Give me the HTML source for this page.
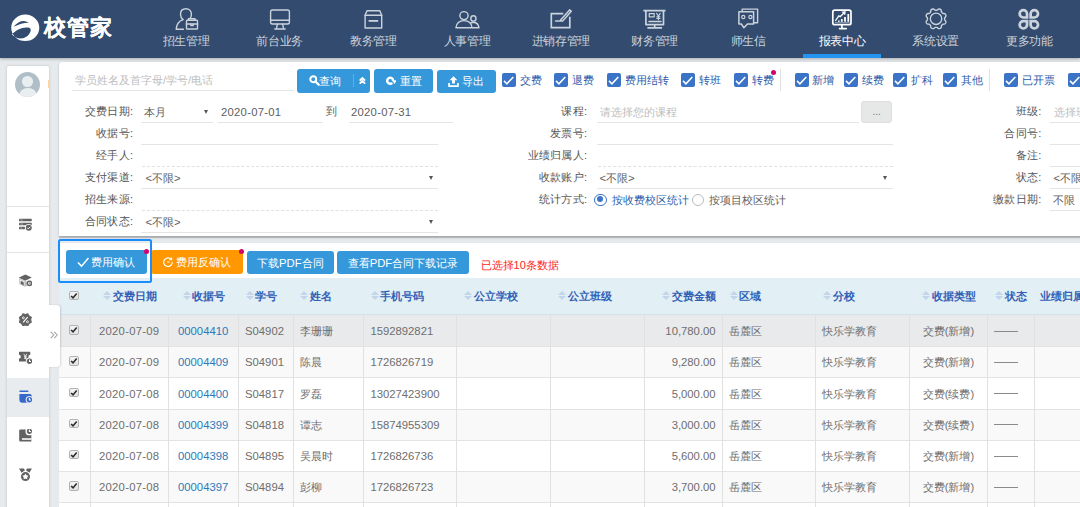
<!DOCTYPE html>
<html lang="zh">
<head>
<meta charset="utf-8">
<title>校管家</title>
<style>
*{box-sizing:border-box;margin:0;padding:0}
html,body{width:1080px;height:507px;overflow:hidden}
body{position:relative;background:#e6eaed;font-family:"Liberation Sans",sans-serif;font-size:11px;color:#555;line-height:1}
.abs{position:absolute}
/* NAV */
#nav{position:absolute;left:0;top:0;width:1080px;height:57.5px;background:#324b6e;box-shadow:0 1px 3px rgba(0,0,0,.28);z-index:5}
#logo-t{position:absolute;left:43.6px;top:15.2px;font-size:21.6px;font-weight:bold;color:#fff;line-height:26px;letter-spacing:1.1px;white-space:nowrap;-webkit-text-stroke:.1px #fff}
.ni{position:absolute;top:0;width:93.7px;height:57.5px;text-align:center;color:#cbd3dd}
.ni svg{position:absolute;left:50%;top:6px;width:30px;height:26px;margin-left:-15px;overflow:visible}
.ni span{position:absolute;left:0;right:0;top:34.4px;letter-spacing:-.3px;font-size:11.6px;line-height:13px;white-space:nowrap}
.ni.act{color:#fff}
.ni.act:after{content:"";position:absolute;left:8px;right:8px;bottom:0;height:3.5px;background:#2494f0}
/* SIDEBAR */
#side{position:absolute;left:7px;top:65.5px;width:42.3px;height:460px;background:#fff;box-shadow:0 0 3px rgba(0,0,0,.18);border-radius:2px 2px 0 0}
#tab{position:absolute;left:48px;top:304.6px;width:12.2px;height:62.6px;background:#fff;border-radius:0 3px 3px 0;box-shadow:1px 0 2px rgba(0,0,0,.14);z-index:3;color:#aaa;font-size:13px}
.sdiv{position:absolute;left:0;width:42.3px;height:1px;background:#e4e4e4}
.sic{position:absolute;left:11.5px;width:13.5px;height:13.5px}
/* FILTER PANEL */
#fp{position:absolute;left:59px;top:62px;width:1040px;height:174px;background:#fff;box-shadow:0 1.2px 1.6px rgba(0,0,0,.26),0 0 2px rgba(0,0,0,.08);border-radius:3px 0 0 0}
.lbl{position:absolute;text-align:right;font-size:11px;line-height:14px;color:#555;white-space:nowrap;letter-spacing:.25px}
.fld{position:absolute;height:1px;background:#e4e4e4}
.fldd{position:absolute;height:0;border-top:1px dashed #e1e1e1}
.val{position:absolute;font-size:11.3px;line-height:14px;color:#606060;white-space:nowrap}
.ph{color:#bdbdbd;font-size:11px}
.arr{position:absolute;width:0;height:0;margin-left:.5px;border-left:2.4px solid transparent;border-right:2.4px solid transparent;border-top:4.6px solid #555}
.btn{position:absolute;background:#3498db;color:#fff;border-radius:3px;font-size:11.3px;line-height:14px;white-space:nowrap}
.cb{position:absolute;top:73.2px;width:14px;height:14px;background:#3b74c6;border-radius:2px}
.cb svg{position:absolute;left:0;top:0;width:14px;height:14px}
.cbl{position:absolute;top:73.2px;line-height:14px;font-size:11px;color:#2d5baa;white-space:nowrap}
.vd{position:absolute;top:69px;width:1px;height:22px;background:#e1e1e1}
.dot{position:absolute;width:5px;height:5px;border-radius:50%;background:#d4036d}
/* TABLE */
#tp{position:absolute;left:59px;top:242.6px;width:1040px;height:300px;background:#fff}
#th{position:absolute;left:59px;top:278px;width:1040px;height:37.4px;background:#e2eff5;border-bottom:1px solid #d3e4ec}
.h{position:absolute;top:289.3px;font-size:10.5px;font-weight:bold;color:#3160b6;line-height:14px;letter-spacing:0;white-space:nowrap}
.so{position:absolute;top:291.2px;width:8px;height:10px}
.so:before{content:"";position:absolute;left:0;top:0;border-left:4px solid transparent;border-right:4px solid transparent;border-bottom:4.9px solid #c3d5ea}
.so:after{content:"";position:absolute;left:0;top:5.1px;border-left:4px solid transparent;border-right:4px solid transparent;border-top:4.9px solid #c3d5ea}
.row{position:absolute;left:59px;width:1040px;height:31.2px;border-bottom:1px solid #e3e3e3;background:#fff}
.row.s{background:#f9f9f9}
.row.hv{background:#e8eaec}
.c{position:absolute;top:9px;line-height:14px;font-size:11px;color:#6e6e6e;white-space:nowrap}
.n{font-size:11.3px}
.d{letter-spacing:.25px}
.lk{color:#2a7ab9}
.vl{position:absolute;top:315.4px;width:1px;height:200px;background:#e1e1e1}
.ck{position:absolute;left:69.2px;width:9.6px;height:9.6px;border:1px solid #b2b2b2;border-radius:2px;background:linear-gradient(#f5f5f5,#e2e2e2)}
.ck svg{position:absolute;left:-1px;top:-1px;width:9.6px;height:9.6px}
</style>
</head>
<body>
<div id="nav">
<svg class="abs" style="left:10px;top:13px;width:30px;height:30px" viewBox="0 0 30 30"><path fill-rule="evenodd" fill="#fff" d="M1.2 14.8a14.05 13.2 0 1 0 28.1 0a14.05 13.2 0 1 0-28.1 0zM3.6 13.8Q11.2 4.8 18.8 9.7Q11 9.9 3.6 13.8zM2 21.5C5.8 17 12 13.9 18.2 14.6c2.6.3 3 2.4 2.1 4.5-1.6 3.8-5.4 6.6-9.8 6.4-3.6-.2-6.5-1.6-8.5-4z"/></svg>
<div id="logo-t">校管家</div>
<div class="ni" style="left:139.2px"><svg viewBox="0 0 30 26"><g fill="none" stroke="currentColor" stroke-width="1.4" stroke-linecap="round" stroke-linejoin="round"><path d="M12 13.6c-1.6-1.2-2.5-3.1-2.5-5.4 0-3.3 2.3-5.4 5.5-5.4s5.4 2.2 5.4 5.4c0 1.4-.3 2.6-.9 3.6"/><path d="M12 13.6C8 15 5.6 18.2 5.2 23.2h7.3"/><rect x="15.5" y="14.3" width="11" height="8.7" rx=".8"/><path d="M17.4 14.3v-1.5h6.6v1.5"/><path d="M15.5 18h11" stroke-width="1.7"/><path d="M19.8 18v1.6h2.4V18"/></g></svg><span>招生管理</span></div>
<div class="ni" style="left:232.9px"><svg viewBox="0 0 30 26"><g fill="none" stroke="currentColor" stroke-width="1.4" stroke-linecap="round" stroke-linejoin="round"><rect x="5.6" y="4" width="18.8" height="14" rx="1.8"/><path d="M5.6 14.2h18.8M12.4 18.2l-.8 3.4M17.6 18.2l.8 3.4M9.8 23h10.4"/></g></svg><span>前台业务</span></div>
<div class="ni" style="left:326.6px"><svg viewBox="0 0 30 26"><g fill="none" stroke="currentColor" stroke-width="1.4" stroke-linecap="round" stroke-linejoin="round"><path d="M9 4.8h12.8l1.9 4.5V22H7.1V9.3z"/><path d="M7.1 9.3h16.6"/><path d="M10.6 14.9h9.6" stroke-width="1.8" stroke-linecap="butt"/></g></svg><span>教务管理</span></div>
<div class="ni" style="left:420.3px"><svg viewBox="0 0 30 26"><g fill="none" stroke="currentColor" stroke-width="1.4" stroke-linecap="round" stroke-linejoin="round"><ellipse cx="12" cy="9.6" rx="4.1" ry="4"/><path d="M3.9 21.8c.5-4.4 3.7-7.2 8.1-7.2s7.6 2.8 8.1 7.2z"/><ellipse cx="21.4" cy="12.4" rx="2.6" ry="2.7"/><path d="M20.6 21.8h6.4c-.4-3.2-2.4-5.3-5.4-5.6-1 0-1.9.2-2.7.7"/></g></svg><span>人事管理</span></div>
<div class="ni" style="left:514.0px"><svg viewBox="0 0 30 26"><g fill="none" stroke="currentColor" stroke-width="1.4" stroke-linecap="round" stroke-linejoin="round"><path d="M17.3 7.6H5.3v14h18.5V10.8" stroke-width="1.7" stroke-linecap="butt" stroke-linejoin="miter"/><path d="M23.6 3.9l1.7 1.4-8.6 9.6H9.6M23.6 3.9l-9 10" stroke-width="1.5"/></g></svg><span>进销存管理</span></div>
<div class="ni" style="left:607.7px"><svg viewBox="0 0 30 26"><g fill="none" stroke="currentColor" stroke-width="1.4" stroke-linecap="round" stroke-linejoin="round"><path d="M3.4 4.6h22.1M5.9 4.6v14h17.6v-14M14.7 18.6v3M7.4 21.8h14.7" stroke-width="1.7" stroke-linecap="butt"/><rect x="9.2" y="7.6" width="5" height="3.2" stroke-width="1.2"/><path d="M9 15.4h12" stroke-width="1.5"/><path d="M16.6 7.4l1.8 2.7 1.8-2.7M18.4 10.1v3.7M16.8 10.8h3.2M16.8 12.4h3.2" stroke-width="1.1"/></g></svg><span>财务管理</span></div>
<div class="ni" style="left:701.4px"><svg viewBox="0 0 30 26"><g fill="none" stroke="currentColor" stroke-width="1.4" stroke-linecap="round" stroke-linejoin="round"><path d="M9.2 5.6V3.1h15.4v13.7h-3.6"/><path d="M5.9 5.8h14.7V18h-6.2l-3.5 3.8L8.4 18H5.9z" stroke-width="1.5"/><circle cx="10.3" cy="11" r="1.6" stroke-width="1.2"/><circle cx="17.4" cy="11" r="1.6" stroke-width="1.2"/></g></svg><span>师生信</span></div>
<div class="ni act" style="left:795.1px"><svg viewBox="0 0 30 26"><g fill="none" stroke="currentColor" stroke-width="1.4" stroke-linecap="round" stroke-linejoin="round"><rect x="5.8" y="4.15" width="18.2" height="14.6" rx="2" stroke-width="1.7"/><path d="M14.9 18.8v3.8M12.6 22.6h6.6" stroke-width="1.7"/><path d="M8.6 14.5l3.2-4.7 1.3 1 3.5-3.6" stroke-width="1.3"/><path d="M15.3 5.9l3.1-.5-.4 3.1z" fill="currentColor" stroke-width=".6"/><path d="M11.8 15.8v-1.4M14.8 15.8v-2.9M18 15.8v-4.7M21.3 15.8V8.1" stroke-width="1.8" stroke-linecap="butt"/><path d="M8.3 16.9h14" stroke-width=".9" opacity=".75"/></g></svg><span>报表中心</span></div>
<div class="ni" style="left:888.8px"><svg viewBox="0 0 30 26"><g fill="none" stroke="currentColor" stroke-width="1.4" stroke-linecap="round" stroke-linejoin="round"><circle cx="15.05" cy="12.8" r="5.7"/><path d="M23.60 12.80 L23.62 13.14 L23.68 13.48 L23.78 13.83 L23.94 14.21 L24.37 14.65 L24.77 15.13 L24.88 15.57 L24.89 16.00 L24.83 16.41 L24.70 16.80 L24.52 17.16 L24.27 17.50 L23.96 17.79 L23.57 18.02 L22.95 18.08 L22.33 18.09 L21.95 18.24 L21.63 18.42 L21.35 18.62 L21.10 18.85 L20.87 19.10 L20.67 19.38 L20.49 19.70 L20.34 20.08 L20.33 20.70 L20.27 21.32 L20.04 21.71 L19.75 22.02 L19.41 22.27 L19.05 22.45 L18.66 22.58 L18.25 22.64 L17.82 22.63 L17.38 22.52 L16.90 22.12 L16.46 21.69 L16.08 21.53 L15.73 21.43 L15.39 21.37 L15.05 21.35 L14.71 21.37 L14.37 21.43 L14.02 21.53 L13.64 21.69 L13.20 22.12 L12.72 22.52 L12.28 22.63 L11.85 22.64 L11.44 22.58 L11.05 22.45 L10.69 22.27 L10.35 22.02 L10.06 21.71 L9.83 21.32 L9.77 20.70 L9.76 20.08 L9.61 19.70 L9.43 19.38 L9.23 19.10 L9.00 18.85 L8.75 18.62 L8.47 18.42 L8.15 18.24 L7.77 18.09 L7.15 18.08 L6.53 18.02 L6.14 17.79 L5.83 17.50 L5.58 17.16 L5.40 16.80 L5.27 16.41 L5.21 16.00 L5.22 15.57 L5.33 15.13 L5.73 14.65 L6.16 14.21 L6.32 13.83 L6.42 13.48 L6.48 13.14 L6.50 12.80 L6.48 12.46 L6.42 12.12 L6.32 11.77 L6.16 11.39 L5.73 10.95 L5.33 10.47 L5.22 10.03 L5.21 9.60 L5.27 9.19 L5.40 8.80 L5.58 8.44 L5.83 8.10 L6.14 7.81 L6.53 7.58 L7.15 7.52 L7.77 7.51 L8.15 7.36 L8.47 7.18 L8.75 6.98 L9.00 6.75 L9.23 6.50 L9.43 6.22 L9.61 5.90 L9.76 5.52 L9.77 4.90 L9.83 4.28 L10.06 3.89 L10.35 3.58 L10.69 3.33 L11.05 3.15 L11.44 3.02 L11.85 2.96 L12.28 2.97 L12.72 3.08 L13.20 3.48 L13.64 3.91 L14.02 4.07 L14.37 4.17 L14.71 4.23 L15.05 4.25 L15.39 4.23 L15.73 4.17 L16.08 4.07 L16.46 3.91 L16.90 3.48 L17.38 3.08 L17.82 2.97 L18.25 2.96 L18.66 3.02 L19.05 3.15 L19.41 3.33 L19.75 3.58 L20.04 3.89 L20.27 4.28 L20.33 4.90 L20.34 5.52 L20.49 5.90 L20.67 6.22 L20.87 6.50 L21.10 6.75 L21.35 6.98 L21.63 7.18 L21.95 7.36 L22.33 7.51 L22.95 7.52 L23.57 7.58 L23.96 7.81 L24.27 8.10 L24.52 8.44 L24.70 8.80 L24.83 9.19 L24.89 9.60 L24.88 10.03 L24.77 10.47 L24.37 10.95 L23.94 11.39 L23.78 11.77 L23.68 12.12 L23.62 12.46z"/></g></svg><span>系统设置</span></div>
<div class="ni" style="left:982.5px"><svg viewBox="0 0 30 26"><g fill="none" stroke="currentColor" stroke-width="2.7" stroke-linejoin="miter"><path d="M13.05 11.5V7.8a3.7 3.7 0 1 0-3.7 3.7zM16.65 11.5V7.8a3.7 3.7 0 1 1 3.7 3.7zM13.05 15.1v3.7a3.7 3.7 0 1 1-3.7-3.7zM16.65 15.1v3.7a3.7 3.7 0 1 0 3.7-3.7z"/></g></svg><span>更多功能</span></div>
</div>
<div id="side">
<div class="abs" style="left:8px;top:6px;width:25px;height:25px;border-radius:50%;background:#b0bfc7;overflow:hidden"><i class="abs" style="left:7.3px;top:4.8px;width:10.4px;height:10.4px;border-radius:50%;background:#e9eef1"></i><i class="abs" style="left:3.5px;top:16.5px;width:18px;height:16px;border-radius:50%;background:#e9eef1"></i></div>
<div class="abs" style="left:40.8px;top:14.5px;width:1.5px;height:8px;background:#fbd6a4"></div>
<div class="sdiv" style="top:140px"></div><div class="sdiv" style="top:186.5px"></div>
<div class="abs" style="left:0;top:312px;width:42.3px;height:39.5px;background:#e8ecef"></div>
<svg class="sic" style="top:152.9px" viewBox="0 0 14 14" fill="#626262"><rect x="0" y=".75" width="13.2" height="2.7" rx=".5"/><rect x="0" y="4.9" width="13.2" height="2.7" rx=".5"/><rect x="0" y="9.05" width="6.2" height="2.7" rx=".5"/><circle cx="10.1" cy="10.1" r="3.9" fill="#fff"/><circle cx="10.1" cy="10.1" r="3.1"/><path d="M8.5 10.1l1.2 1.2 2-2.2" stroke="#fff" stroke-width="1" fill="none"/><path d="M1.4 2.1h2.6M1.4 6.25h2.6M1.4 10.4h2" stroke="#cfcfcf" stroke-width=".7"/></svg>
<svg class="sic" style="top:208.6px" viewBox="0 0 14 14" fill="#626262"><path d="M6.6.5l6.6 3.2-6.7 3.3L-.2 3.7z"/><path d="M.3 5l5.7 2.8v5L.3 10z" fill="none" stroke="#b9b9b9" stroke-width=".9"/><path d="M1.7 6.9l3.2 1.6v3.3l-3.2-1.6z"/><path d="M7.2 7.8v5" stroke="#8a8a8a" stroke-width="1"/><circle cx="10.8" cy="9.7" r="2.2" fill="none" stroke="#666" stroke-width="1.6"/><path d="M10.8 8.7v1.2h1" stroke="#666" stroke-width=".8" fill="none"/></svg>
<svg class="sic" style="top:247.1px" viewBox="0 0 14 14" fill="#626262"><path d="M9.13 0.90 L10.42 3.18 L12.70 4.47 L12.00 7.00 L12.70 9.53 L10.42 10.82 L9.13 13.10 L6.60 12.40 L4.07 13.10 L2.78 10.82 L0.50 9.53 L1.20 7.00 L0.50 4.47 L2.78 3.18 L4.07 0.90 L6.60 1.60z" stroke="#666" stroke-width="1.2" stroke-linejoin="round"/><path d="M9 4.2L4.3 9.8" stroke="#fff" stroke-width="1.2"/><circle cx="4.5" cy="5" r="1" fill="none" stroke="#fff" stroke-width=".9"/><circle cx="8.8" cy="9.1" r="1" fill="none" stroke="#fff" stroke-width=".9"/></svg>
<svg class="sic" style="top:285.4px" viewBox="0 0 14 14" fill="#626262"><path d="M.4.8h10.8a.5.5 0 0 1 .5.5v2.6a2 2 0 0 0 0 4v2.6a.5.5 0 0 1-.5.5H.4a.5.5 0 0 1-.5-.5V7.9a2 2 0 0 0 0-4V1.3A.5.5 0 0 1 .4.8z"/><path d="M4.9 3l1.7 2.4L8.3 3M6.6 5.4v3.2M5.2 6h2.8M5.2 7.4h2.8" stroke="#fff" stroke-width=".9" fill="none"/><circle cx="10.9" cy="10.6" r="3.8" fill="#fff"/><circle cx="10.9" cy="10.6" r="2.8"/><path d="M10.9 8.8v2h1.6" stroke="#fff" stroke-width="1.1" fill="none"/></svg>
<svg class="sic" style="top:324.8px" viewBox="0 0 14 14" fill="#3769cb"><rect x="0.4" y="0.6" width="9.4" height="1.4" rx=".4"/><path d="M.4 4.1h10.8a2 2 0 0 1 2 2v7.1H3.4a3 3 0 0 1-3-3z"/><circle cx="10.8" cy="10.1" r="3.9" fill="#e8ecef"/><circle cx="10.8" cy="10.1" r="2.8"/><path d="M10.8 8.3v2h1.6" stroke="#fff" stroke-width="1.1" fill="none"/></svg>
<svg class="sic" style="top:363.6px" viewBox="0 0 14 14" fill="#626262"><path d="M1.4.4h11.4v12.6H1.4a1.2 1.2 0 0 1-1.2-1.2V1.6A1.2 1.2 0 0 1 1.4.4z"/><rect x="3" y="9.6" width="10" height="1.6" fill="#fff"/><circle cx="10.8" cy="2.5" r="4.1" fill="#fff"/><circle cx="10.8" cy="2.4" r="2.7"/><path d="M10.8 .6v2h1.6" stroke="#fff" stroke-width="1.1" fill="none"/></svg>
<svg class="sic" style="top:402.8px" viewBox="0 0 14 14" fill="#626262"><path d="M0 .6h5l1.2 1.8-3.6 2.4zM13.4.6h-5L7.2 2.4l3.6 2.4z"/><circle cx="6.7" cy="8.9" r="5.4" fill="#fff"/><circle cx="6.7" cy="8.9" r="4.7"/><path d="M6.70 5.70 L7.82 7.46 L9.84 7.98 L8.51 9.59 L8.64 11.67 L6.70 10.90 L4.76 11.67 L4.89 9.59 L3.56 7.98 L5.58 7.46z" fill="#fff"/></svg>
</div>
<div id="tab"><svg class="abs" style="left:1.7px;top:26.6px;width:8px;height:8px" viewBox="0 0 8 8" fill="none" stroke="#a2a2a2" stroke-width="1.05"><path d="M.8.8l3 3.2-3 3.2M4.2.8l3 3.2-3 3.2"/></svg></div>
<div id="fp"></div>
<div class="val ph" style="left:75px;top:73px">学员姓名及首字母/学号/电话</div>
<div class="fld" style="left:72px;top:90px;width:222px"></div>
<div class="btn" style="left:297.4px;top:69.3px;width:73px;height:23.4px"><svg class="abs" style="left:11.6px;top:6.2px;width:10.6px;height:10.6px" viewBox="0 0 10 10" fill="none" stroke="#fff"><circle cx="4" cy="4" r="2.8" stroke-width="1.9"/><path d="M6.3 6.3l2.8 2.8" stroke-width="2.1" stroke-linecap="round"/></svg><span class="abs" style="left:22px;top:4.7px">查询</span><i class="abs" style="left:56px;top:5px;width:1px;height:13px;background:rgba(255,255,255,.22)"></i><svg class="abs" style="left:62px;top:8.2px;width:6.8px;height:6.8px" viewBox="0 0 8 8" fill="none" stroke="#fff" stroke-width="2.2"><path d="M.8 4.2L4 1.2l3.2 3M.8 7.8L4 4.8l3.2 3"/></svg></div>
<div class="btn" style="left:374px;top:69.3px;width:59px;height:23.4px"><svg class="abs" style="left:12px;top:6.6px;width:10px;height:10px" viewBox="0 0 10 10"><path d="M6.3 6.95A3 3 0 1 1 7.19 4.54" fill="none" stroke="#fff" stroke-width="2.4"/><path d="M5.9 4.3h4.7L8.5 7.9z" fill="#fff"/></svg><span class="abs" style="left:25.6px;top:4.7px">重置</span></div>
<div class="btn" style="left:436.5px;top:70.2px;width:59px;height:22.5px"><svg class="abs" style="left:11px;top:6px;width:11px;height:11px" viewBox="0 0 10 10" fill="#fff"><path d="M5 .2l3.6 3.7H6.3v3H3.7v-3H1.4z"/><path d="M.2 6.3h1.6v2h6.4v-2h1.6V10H.2z"/></svg><span class="abs" style="left:25.5px;top:4.2px">导出</span></div>
<div class="cb" style="left:502px"><svg viewBox="0 0 14 14"><path d="M2 7.9l2.9 2.9L11.3 3.9" fill="none" stroke="#fff" stroke-width="1.5"/></svg></div>
<div class="cbl" style="left:520px">交费</div>
<div class="cb" style="left:554.3px"><svg viewBox="0 0 14 14"><path d="M2 7.9l2.9 2.9L11.3 3.9" fill="none" stroke="#fff" stroke-width="1.5"/></svg></div>
<div class="cbl" style="left:572.3px">退费</div>
<div class="cb" style="left:607px"><svg viewBox="0 0 14 14"><path d="M2 7.9l2.9 2.9L11.3 3.9" fill="none" stroke="#fff" stroke-width="1.5"/></svg></div>
<div class="cbl" style="left:624.8px">费用结转</div>
<div class="cb" style="left:681.3px"><svg viewBox="0 0 14 14"><path d="M2 7.9l2.9 2.9L11.3 3.9" fill="none" stroke="#fff" stroke-width="1.5"/></svg></div>
<div class="cbl" style="left:699.3px">转班</div>
<div class="cb" style="left:733.7px"><svg viewBox="0 0 14 14"><path d="M2 7.9l2.9 2.9L11.3 3.9" fill="none" stroke="#fff" stroke-width="1.5"/></svg></div>
<div class="cbl" style="left:751.7px">转费</div>
<div class="cb" style="left:794.5px"><svg viewBox="0 0 14 14"><path d="M2 7.9l2.9 2.9L11.3 3.9" fill="none" stroke="#fff" stroke-width="1.5"/></svg></div>
<div class="cbl" style="left:812.3px">新增</div>
<div class="cb" style="left:844.2px"><svg viewBox="0 0 14 14"><path d="M2 7.9l2.9 2.9L11.3 3.9" fill="none" stroke="#fff" stroke-width="1.5"/></svg></div>
<div class="cbl" style="left:862px">续费</div>
<div class="cb" style="left:893.4px"><svg viewBox="0 0 14 14"><path d="M2 7.9l2.9 2.9L11.3 3.9" fill="none" stroke="#fff" stroke-width="1.5"/></svg></div>
<div class="cbl" style="left:911.2px">扩科</div>
<div class="cb" style="left:942.8px"><svg viewBox="0 0 14 14"><path d="M2 7.9l2.9 2.9L11.3 3.9" fill="none" stroke="#fff" stroke-width="1.5"/></svg></div>
<div class="cbl" style="left:960.7px">其他</div>
<div class="cb" style="left:1003.6px"><svg viewBox="0 0 14 14"><path d="M2 7.9l2.9 2.9L11.3 3.9" fill="none" stroke="#fff" stroke-width="1.5"/></svg></div>
<div class="cbl" style="left:1021.6px">已开票</div>
<div class="cb" style="left:1068px"><svg viewBox="0 0 14 14"><path d="M2 7.9l2.9 2.9L11.3 3.9" fill="none" stroke="#fff" stroke-width="1.5"/></svg></div>
<div class="vd" style="left:780px"></div><div class="vd" style="left:989px"></div>
<div class="dot" style="left:771px;top:70.2px"></div>
<div class="lbl" style="left:43.3px;width:90px;top:104.2px">交费日期:</div>
<div class="lbl" style="left:43.3px;width:90px;top:126.2px">收据号:</div>
<div class="lbl" style="left:43.3px;width:90px;top:148.2px">经手人:</div>
<div class="lbl" style="left:43.3px;width:90px;top:170.2px">支付渠道:</div>
<div class="lbl" style="left:43.3px;width:90px;top:192.2px">招生来源:</div>
<div class="lbl" style="left:43.3px;width:90px;top:214.2px">合同状态:</div>
<div class="fld" style="left:141px;top:122px;width:71.5px"></div><div class="fld" style="left:218px;top:122px;width:105px"></div><div class="fld" style="left:348.5px;top:122px;width:104px"></div>
<div class="val" style="left:144px;top:104.6px;font-size:11px">本月</div><div class="arr" style="left:203.3px;top:110px"></div>
<div class="val d" style="left:221px;top:104.6px">2020-07-01</div><div class="val" style="left:326px;top:104.2px;font-size:11px">到</div><div class="val d" style="left:351px;top:104.6px">2020-07-31</div>
<div class="fld" style="left:141px;top:144px;width:297px"></div><div class="fldd" style="left:142px;top:166px;width:296px"></div><div class="fld" style="left:141px;top:188px;width:297px"></div><div class="fldd" style="left:142px;top:210px;width:296px"></div><div class="fld" style="left:141px;top:232px;width:297px"></div>
<div class="val" style="left:145.5px;top:170.8px">&lt;不限&gt;</div><div class="arr" style="left:428.8px;top:176px"></div>
<div class="val" style="left:145.5px;top:214.8px">&lt;不限&gt;</div><div class="arr" style="left:428.8px;top:220px"></div>
<div class="lbl" style="left:497.3px;width:90px;top:104.2px">课程:</div>
<div class="lbl" style="left:497.3px;width:90px;top:126.2px">发票号:</div>
<div class="lbl" style="left:497.3px;width:90px;top:148.2px">业绩归属人:</div>
<div class="lbl" style="left:497.3px;width:90px;top:170.2px">收款账户:</div>
<div class="lbl" style="left:497.3px;width:90px;top:192.2px">统计方式:</div>
<div class="val ph" style="left:600px;top:105px">请选择您的课程</div>
<div class="fld" style="left:597px;top:122px;width:262px"></div>
<div class="abs" style="left:861px;top:101.4px;width:31.3px;height:21.4px;background:#e6e7e7;border:1px solid #dedfdf;border-radius:3px;text-align:center;font-size:10px;line-height:20.6px;color:#777">...</div>
<div class="fld" style="left:597px;top:144px;width:295.5px"></div><div class="fldd" style="left:598px;top:166px;width:294.5px"></div><div class="fld" style="left:597px;top:188px;width:295.5px"></div>
<div class="val" style="left:599.5px;top:170.8px">&lt;不限&gt;</div><div class="arr" style="left:882.3px;top:176px"></div>
<div class="abs" style="left:594.3px;top:193.5px;width:12.4px;height:12.4px;border-radius:50%;border:1.5px solid #3b74c6;background:#fff"><i class="abs" style="left:1.5px;top:1.5px;width:6.4px;height:6.4px;border-radius:50%;background:#3b74c6"></i></div>
<div class="val" style="left:611.8px;top:192.6px;font-size:11px;color:#2d5fae">按收费校区统计</div>
<div class="abs" style="left:692px;top:193.5px;width:12.4px;height:12.4px;border-radius:50%;border:1px solid #bbb;background:#fff"></div>
<div class="val" style="left:709.3px;top:192.6px;font-size:11px">按项目校区统计</div>
<div class="lbl" style="left:951.5px;width:90px;top:104.2px">班级:</div>
<div class="lbl" style="left:951.5px;width:90px;top:126.2px">合同号:</div>
<div class="lbl" style="left:951.5px;width:90px;top:148.2px">备注:</div>
<div class="lbl" style="left:951.5px;width:90px;top:170.2px">状态:</div>
<div class="lbl" style="left:951.5px;width:90px;top:192.2px">缴款日期:</div>
<div class="val ph" style="left:1054px;top:105px">选择班级</div>
<div class="fld" style="left:1049.5px;top:122px;width:40px"></div>
<div class="fld" style="left:1049.5px;top:144px;width:40px"></div>
<div class="fld" style="left:1049.5px;top:166px;width:40px"></div>
<div class="fld" style="left:1049.5px;top:188px;width:40px"></div>
<div class="fld" style="left:1049.5px;top:210px;width:40px"></div>
<div class="val" style="left:1053.5px;top:170.8px">&lt;不限&gt;</div><div class="val" style="left:1053px;top:192.8px;font-size:11px">不限</div>
<div id="tp"></div><div id="th"></div>
<div class="btn" style="left:66.2px;top:250.3px;width:81.2px;height:23.4px"><svg class="abs" style="left:10.4px;top:5.4px;width:12.4px;height:12.4px" viewBox="0 0 11 11" fill="none" stroke="#fff" stroke-width="1.35"><path d="M.8 5.8l3.2 3.2L10.2 1.8"/></svg><span class="abs" style="left:24.8px;top:4.6px">费用确认</span></div>
<div class="btn" style="left:151.4px;top:250.3px;width:91.2px;height:23.4px;background:#ff9800"><svg class="abs" style="left:11.8px;top:6.5px;width:10px;height:10px" viewBox="0 0 10 10" fill="none" stroke="#fff" stroke-width="1.1"><path d="M8.3 2.4A4.3 4.3 0 1 0 9.3 5"/><path d="M8.6.4v2.4H6.2M4 5h2.6"/></svg><span class="abs" style="left:24.8px;top:4.6px">费用反确认</span></div>
<div class="btn" style="left:246.7px;top:250.8px;width:87.2px;height:22.9px"><span class="abs" style="left:0;right:0;top:4.9px;text-align:center">下载PDF合同</span></div>
<div class="btn" style="left:337.2px;top:250.8px;width:131.6px;height:22.9px"><span class="abs" style="left:0;right:0;top:4.9px;text-align:center">查看PDF合同下载记录</span></div>
<div class="dot" style="left:144.2px;top:248.5px"></div><div class="dot" style="left:239.2px;top:248.5px"></div>
<div class="val" style="left:480.6px;top:258px;color:#f22;font-size:11px">已选择10条数据</div>
<div class="abs" style="left:58px;top:239px;width:94.3px;height:43.5px;border:2.2px solid #1a8cfb;border-radius:2.5px"></div>
<div class="h" style="left:113px">交费日期</div>
<div class="so" style="left:102.6px"></div>
<div class="h" style="left:192px">收据号</div>
<div class="so" style="left:182.5px"></div>
<div class="h" style="left:255.4px">学号</div>
<div class="so" style="left:245.5px"></div>
<div class="h" style="left:310px">姓名</div>
<div class="so" style="left:300.1px"></div>
<div class="h" style="left:380.4px">手机号码</div>
<div class="so" style="left:370.5px"></div>
<div class="h" style="left:474.4px">公立学校</div>
<div class="so" style="left:464.1px"></div>
<div class="h" style="left:568px">公立班级</div>
<div class="so" style="left:557.7px"></div>
<div class="h" style="left:672px">交费金额</div>
<div class="so" style="left:662.1px"></div>
<div class="h" style="left:739.4px">区域</div>
<div class="so" style="left:729.5px"></div>
<div class="h" style="left:832.6px">分校</div>
<div class="so" style="left:823.1px"></div>
<div class="h" style="left:932px">收据类型</div>
<div class="so" style="left:922.1px"></div>
<div class="h" style="left:1004.6px">状态</div>
<div class="so" style="left:994.5px"></div>
<div class="h" style="left:1040.4px">业绩归属</div>
<div class="ck" style="top:290.6px"><svg viewBox="0 0 10 10"><path d="M2.2 5.2l2 2L8 2.6" fill="none" stroke="#2b2b2b" stroke-width="1.7"/></svg></div>
<div class="row hv" style="top:315.4px;height:31.6px">
<span class="c n d" style="left:40px;top:8.7px">2020-07-09</span><span class="c n lk" style="left:119px;top:8.7px">00004410</span><span class="c n" style="left:186px;top:8.7px">S04902</span><span class="c" style="left:240.6px;top:8.7px">李珊珊</span><span class="c n" style="left:311.4px;top:8.7px">1592892821</span><span class="c n" style="right:383.4px;top:8.7px">10,780.00</span><span class="c" style="left:670px;top:8.7px">岳麓区</span><span class="c" style="left:763.4px;top:8.7px">快乐学教育</span><span class="c" style="left:850.6px;width:77.8px;text-align:center;top:8.7px">交费(新增)</span><i class="abs" style="left:935px;top:15.3px;width:24px;height:1px;background:#8a8a8a"></i>
</div>
<div class="ck" style="top:325.1px"><svg viewBox="0 0 10 10"><path d="M2.2 5.2l2 2L8 2.6" fill="none" stroke="#2b2b2b" stroke-width="1.7"/></svg></div>
<div class="row s" style="top:347px;height:31.0px">
<span class="c n d" style="left:40px;top:8.3px">2020-07-09</span><span class="c n lk" style="left:119px;top:8.3px">00004409</span><span class="c n" style="left:186px;top:8.3px">S04901</span><span class="c" style="left:240.6px;top:8.3px">陈晨</span><span class="c n" style="left:311.4px;top:8.3px">1726826719</span><span class="c n" style="right:383.4px;top:8.3px">9,280.00</span><span class="c" style="left:670px;top:8.3px">岳麓区</span><span class="c" style="left:763.4px;top:8.3px">快乐学教育</span><span class="c" style="left:850.6px;width:77.8px;text-align:center;top:8.3px">交费(新增)</span><i class="abs" style="left:935px;top:14.9px;width:24px;height:1px;background:#8a8a8a"></i>
</div>
<div class="ck" style="top:356.3px"><svg viewBox="0 0 10 10"><path d="M2.2 5.2l2 2L8 2.6" fill="none" stroke="#2b2b2b" stroke-width="1.7"/></svg></div>
<div class="row" style="top:378px;height:32.0px">
<span class="c n d" style="left:40px;top:8.5px">2020-07-08</span><span class="c n lk" style="left:119px;top:8.5px">00004400</span><span class="c n" style="left:186px;top:8.5px">S04817</span><span class="c" style="left:240.6px;top:8.5px">罗磊</span><span class="c n" style="left:311.4px;top:8.5px">13027423900</span><span class="c n" style="right:383.4px;top:8.5px">5,000.00</span><span class="c" style="left:670px;top:8.5px">岳麓区</span><span class="c" style="left:763.4px;top:8.5px">快乐学教育</span><span class="c" style="left:850.6px;width:77.8px;text-align:center;top:8.5px">交费(续费)</span><i class="abs" style="left:935px;top:15.1px;width:24px;height:1px;background:#8a8a8a"></i>
</div>
<div class="ck" style="top:387.5px"><svg viewBox="0 0 10 10"><path d="M2.2 5.2l2 2L8 2.6" fill="none" stroke="#2b2b2b" stroke-width="1.7"/></svg></div>
<div class="row s" style="top:410px;height:31.0px">
<span class="c n d" style="left:40px;top:7.7px">2020-07-08</span><span class="c n lk" style="left:119px;top:7.7px">00004399</span><span class="c n" style="left:186px;top:7.7px">S04818</span><span class="c" style="left:240.6px;top:7.7px">谭志</span><span class="c n" style="left:311.4px;top:7.7px">15874955309</span><span class="c n" style="right:383.4px;top:7.7px">3,000.00</span><span class="c" style="left:670px;top:7.7px">岳麓区</span><span class="c" style="left:763.4px;top:7.7px">快乐学教育</span><span class="c" style="left:850.6px;width:77.8px;text-align:center;top:7.7px">交费(续费)</span><i class="abs" style="left:935px;top:14.3px;width:24px;height:1px;background:#8a8a8a"></i>
</div>
<div class="ck" style="top:418.7px"><svg viewBox="0 0 10 10"><path d="M2.2 5.2l2 2L8 2.6" fill="none" stroke="#2b2b2b" stroke-width="1.7"/></svg></div>
<div class="row" style="top:441px;height:31.0px">
<span class="c n d" style="left:40px;top:7.9px">2020-07-08</span><span class="c n lk" style="left:119px;top:7.9px">00004398</span><span class="c n" style="left:186px;top:7.9px">S04895</span><span class="c" style="left:240.6px;top:7.9px">吴晨时</span><span class="c n" style="left:311.4px;top:7.9px">1726826736</span><span class="c n" style="right:383.4px;top:7.9px">5,600.00</span><span class="c" style="left:670px;top:7.9px">岳麓区</span><span class="c" style="left:763.4px;top:7.9px">快乐学教育</span><span class="c" style="left:850.6px;width:77.8px;text-align:center;top:7.9px">交费(新增)</span><i class="abs" style="left:935px;top:14.5px;width:24px;height:1px;background:#8a8a8a"></i>
</div>
<div class="ck" style="top:449.9px"><svg viewBox="0 0 10 10"><path d="M2.2 5.2l2 2L8 2.6" fill="none" stroke="#2b2b2b" stroke-width="1.7"/></svg></div>
<div class="row s" style="top:472px;height:31.0px">
<span class="c n d" style="left:40px;top:8.1px">2020-07-08</span><span class="c n lk" style="left:119px;top:8.1px">00004397</span><span class="c n" style="left:186px;top:8.1px">S04894</span><span class="c" style="left:240.6px;top:8.1px">彭柳</span><span class="c n" style="left:311.4px;top:8.1px">1726826723</span><span class="c n" style="right:383.4px;top:8.1px">3,700.00</span><span class="c" style="left:670px;top:8.1px">岳麓区</span><span class="c" style="left:763.4px;top:8.1px">快乐学教育</span><span class="c" style="left:850.6px;width:77.8px;text-align:center;top:8.1px">交费(新增)</span><i class="abs" style="left:935px;top:14.7px;width:24px;height:1px;background:#8a8a8a"></i>
</div>
<div class="ck" style="top:481.1px"><svg viewBox="0 0 10 10"><path d="M2.2 5.2l2 2L8 2.6" fill="none" stroke="#2b2b2b" stroke-width="1.7"/></svg></div>
<div class="row" style="top:503px;height:31.0px">
<span class="c n d" style="left:40px;top:8.3px">2020-07-08</span><span class="c n lk" style="left:119px;top:8.3px">00004396</span><span class="c n" style="left:186px;top:8.3px">S04893</span><span class="c" style="left:240.6px;top:8.3px">李明</span><span class="c n" style="left:311.4px;top:8.3px">1726826711</span><span class="c n" style="right:383.4px;top:8.3px">4,200.00</span><span class="c" style="left:670px;top:8.3px">岳麓区</span><span class="c" style="left:763.4px;top:8.3px">快乐学教育</span><span class="c" style="left:850.6px;width:77.8px;text-align:center;top:8.3px">交费(新增)</span><i class="abs" style="left:935px;top:14.9px;width:24px;height:1px;background:#8a8a8a"></i>
</div>
<div class="ck" style="top:512.3px"><svg viewBox="0 0 10 10"><path d="M2.2 5.2l2 2L8 2.6" fill="none" stroke="#2b2b2b" stroke-width="1.7"/></svg></div>
<div class="vl" style="left:90.1px"></div>
<div class="vl" style="left:168.1px"></div>
<div class="vl" style="left:237.9px"></div>
<div class="vl" style="left:292.5px"></div>
<div class="vl" style="left:362.9px"></div>
<div class="vl" style="left:455.9px"></div>
<div class="vl" style="left:549.9px"></div>
<div class="vl" style="left:643.9px"></div>
<div class="vl" style="left:722.1px"></div>
<div class="vl" style="left:815.1px"></div>
<div class="vl" style="left:909.1px"></div>
<div class="vl" style="left:986.9px"></div>
<div class="vl" style="left:1033.9px"></div>
</body>
</html>
